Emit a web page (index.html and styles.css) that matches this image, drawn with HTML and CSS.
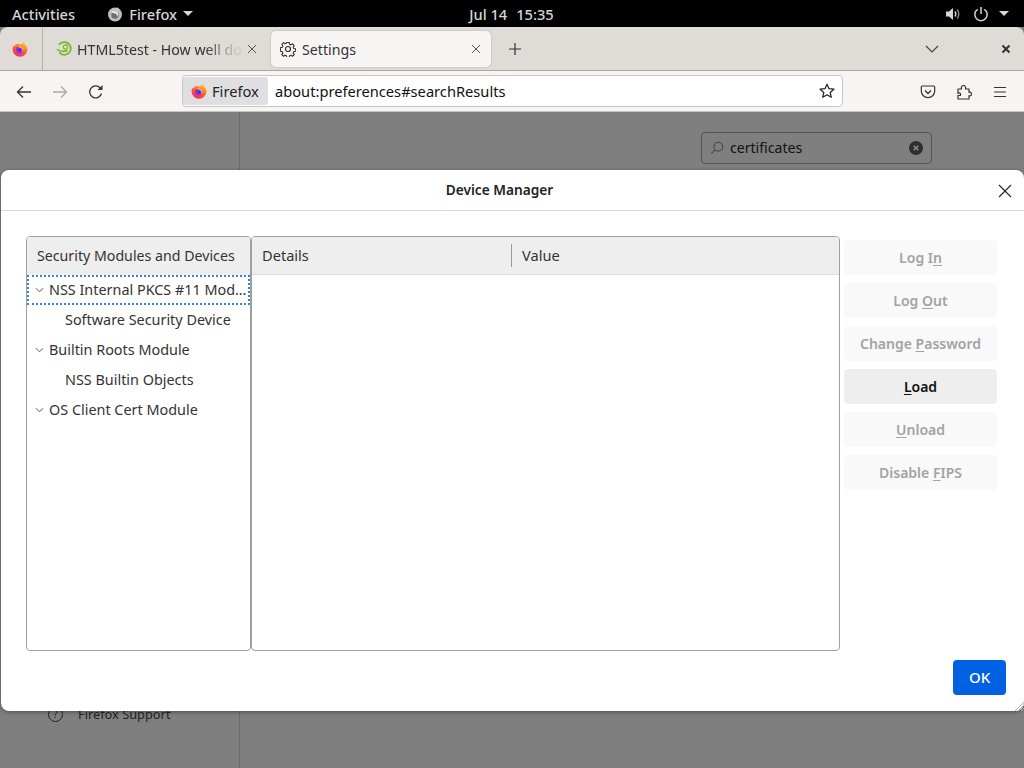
FILE: index.html
```html
<!DOCTYPE html>
<html lang="en">
<head>
<meta charset="utf-8">
<title>Device Manager</title>
<link rel="stylesheet" href="styles.css">
</head>
<body>
<svg class="defs" width="0" height="0" aria-hidden="true">
  <defs>
    <linearGradient id="fx" x1="0.7" y1="0" x2="0.2" y2="1">
      <stop offset="0" stop-color="#ffcf30"/>
      <stop offset="0.45" stop-color="#ff6a2b"/>
      <stop offset="1" stop-color="#f5206a"/>
    </linearGradient>
    <symbol id="firefox" viewBox="0 0 16 16">
      <path d="M11.200 0.600c.3 1.300 1.100 1.700 2.200 3.100 1.200 1.300 2.100 2.800 2.100 4.500a7.500 7.500 0 0 1-15 0c0-1.400.4-2.700 1.100-3.800.3.600.5.900.9 1.100C2.900 3.600 4.600 2.600 6.300 2.800c1 .1 1.600.5 2.200.6 1.400-.2 2.500-1.400 2.700-2.800z" fill="url(#fx)"/>
      <circle cx="7.800" cy="8.800" r="3.800" fill="#8a35e0"/>
      <path d="M5 5.800c2-1.500 5.300-1.100 6.400 1.300.8 1.900-.1 3.900-1.900 4.600 1-1 1.200-2.500.6-3.500C9.400 6.900 7.100 6.600 5 5.800z" fill="#ffb52e"/>
      <circle cx="7.700" cy="9" r="1.500" fill="#4f2bd8"/>
    </symbol>
  </defs>
</svg>
<div class="shell">
  <header class="topbar">
    <div class="top-left">
      <span class="top-label">Activities</span>
      <span class="app-menu">
        <svg class="app-icon" viewBox="0 0 16 16"><circle cx="8" cy="8.500" r="7" fill="#bdbdbd"/><circle cx="8" cy="9" r="3.700" fill="#6e6e6e"/><path d="M4 6c2-2 6-1.500 7 1 .6 1.600 0 3-1 3.800.4-1.600-.6-3-2-3.300C6.500 7.200 5 7 4 6z" fill="#e2e2e2"/><path d="M10 .8c.6 1.400 2 2.200 3 3.400L10 3z" fill="#dcdcdc"/></svg>
        <span class="top-label">Firefox</span>
        <span class="caret"></span>
      </span>
    </div>
    <div class="clock"><span class="clock-date">Jul 14</span><span>15:35</span></div>
    <div class="top-right">
      <svg class="vol" viewBox="0 0 16 16"><path d="M1 5.500h3L8 2v12L4 10.500H1z" fill="#d6d6d6"/><path d="M10 5.500c1 1.500 1 3.500 0 5" stroke="#d6d6d6" stroke-width="1.400" fill="none"/><path d="M12.300 3.500c1.800 2.700 1.800 6.300 0 9" stroke="#8a8a8a" stroke-width="1.400" fill="none"/></svg>
      <svg class="power" viewBox="0 0 16 16"><path d="M4.700 3.300a6.200 6.200 0 1 0 6.600 0" stroke="#d6d6d6" stroke-width="1.500" fill="none"/><path d="M8 1v7" stroke="#d6d6d6" stroke-width="1.500"/></svg>
      <span class="caret"></span>
    </div>
  </header>

  <div class="window">
    <nav class="tabbar">
      <div class="pinned"><svg class="fx"><use href="#firefox"/></svg></div>
      <div class="tab">
        <svg class="tab-icon" viewBox="0 0 16 16"><path d="M3 3.800C4.400 2 6.300 1.200 8.500 1.200c3.500 0 6.300 2.800 6.300 6.300s-2.800 6.300-6.300 6.300c-2.200 0-4-.9-5.300-2.500" stroke="#73ba25" stroke-width="1.800" fill="none"/><path d="M.8 8.200c2.600 1.900 6.800 2.700 10.800 1.300" stroke="#73ba25" stroke-width="1.400" fill="none"/><circle cx="9.500" cy="6" r="2.100" stroke="#73ba25" stroke-width="1.100" fill="none"/></svg>
        <span class="tab-title fade">HTML5test - How well do</span>
        <svg class="tab-x" viewBox="0 0 10 10"><path d="M1 1l8 8M9 1l-8 8" stroke="#555" stroke-width="1"/></svg>
      </div>
      <div class="tab tab-active">
        <svg class="tab-icon" viewBox="0 0 16 16"><path d="M6.700 1h2.600l.4 2 1.300.6 1.800-1.100 1.800 1.800-1.100 1.800.6 1.300 2 .4v2.600l-2 .4-.6 1.300 1.100 1.800-1.800 1.800-1.800-1.100-1.300.6-.4 2H6.700l-.4-2-1.300-.6-1.800 1.100-1.800-1.800 1.100-1.800-.6-1.300-2-.4V6.500l2-.4.6-1.300L1.400 3l1.800-1.800L5 2.300l1.300-.6z" transform="translate(.5 .5) scale(.94)" stroke="#333" stroke-width="1.200" stroke-linejoin="round" fill="none"/><circle cx="8" cy="8" r="2.500" stroke="#333" stroke-width="1.200" fill="none"/></svg>
        <span class="tab-title">Settings</span>
        <svg class="tab-x" viewBox="0 0 10 10"><path d="M1 1l8 8M9 1l-8 8" stroke="#555" stroke-width="1"/></svg>
      </div>
      <svg class="new-tab" viewBox="0 0 14 14"><path d="M7 1v12M1 7h12" stroke="#333" stroke-width="1.200"/></svg>
      <div class="tabbar-end">
        <svg class="tabs-chevron" viewBox="0 0 14 8"><path d="M1 1l6 6 6-6" stroke="#444" stroke-width="1.200" fill="none"/></svg>
        <svg class="win-close" viewBox="0 0 10 10"><path d="M1.500 1.500l7 7M8.500 1.500l-7 7" stroke="#2e3436" stroke-width="2"/></svg>
      </div>
    </nav>

    <div class="toolbar">
      <div class="nav-buttons">
        <svg class="nav-icon" viewBox="0 0 16 16"><path d="M15 8H1.500M7 2.500L1.500 8 7 13.500" stroke="#333" stroke-width="1.300" fill="none"/></svg>
        <svg class="nav-icon" viewBox="0 0 16 16"><path d="M1 8h13.500M9 2.500L14.500 8 9 13.500" stroke="#aaa" stroke-width="1.300" fill="none"/></svg>
        <svg class="nav-icon" viewBox="0 0 16 16"><path d="M13.500 9.500A6 6 0 1 1 12 3.700" stroke="#333" stroke-width="1.300" fill="none"/><path d="M14.500 1v5h-5z" fill="#333"/></svg>
      </div>
      <div class="urlbar">
        <span class="identity"><svg class="fx"><use href="#firefox"/></svg><span>Firefox</span></span>
        <span class="url">about:preferences#searchResults</span>
        <svg class="star" viewBox="0 0 16 16"><path d="M8 1.200l2 4.500 4.900.5-3.700 3.300 1.100 4.800L8 11.800l-4.300 2.500 1.100-4.800L1.100 6.200 6 5.700z" stroke="#222" stroke-width="1.200" stroke-linejoin="round" fill="none"/></svg>
      </div>
      <div class="tool-icons">
        <svg class="tool-icon" viewBox="0 0 16 16"><path d="M2.500 2h11c.8 0 1.200.5 1.200 1.200V7a6.700 6.700 0 0 1-13.400 0V3.200C1.300 2.500 1.700 2 2.500 2z" stroke="#333" stroke-width="1.200" fill="none"/><path d="M5 6.500l3 3 3-3" stroke="#333" stroke-width="1.300" fill="none"/></svg>
        <svg class="tool-icon" viewBox="0 0 16 16"><path d="M2 5h3.500C5 3 6 1.500 7.500 1.500S10 3 9.500 5H13v3.300c2-.6 2.500 1 2.500 1.700s-.5 2.300-2.500 1.700V15H2v-3.500h2.300c.8-1.800-.3-2.700-1-2.700-.5 0-1 .2-1.300.7z" stroke="#333" stroke-width="1.200" stroke-linejoin="round" fill="none"/></svg>
        <svg class="tool-icon" viewBox="0 0 16 16"><path d="M2 3.500h12M2 8h12M2 12.500h12" stroke="#333" stroke-width="1.200"/></svg>
      </div>
    </div>

    <main class="content">
      <aside class="sidebar">
        <div class="support">
          <span class="help">?</span>
          <span>Firefox Support</span>
        </div>
      </aside>
      <div class="pane">
        <div class="search">
          <svg class="search-icon" viewBox="0 0 16 16"><circle cx="9.500" cy="6.500" r="5" stroke="#444" stroke-width="1.200" fill="none"/><path d="M6 10L1.500 14.500" stroke="#444" stroke-width="1.200"/></svg>
          <span class="search-text">certificates</span>
          <svg class="search-clear" viewBox="0 0 14 14"><circle cx="7" cy="7" r="7" fill="#2e2e2e"/><path d="M4.700 4.700l4.600 4.600M9.300 4.700l-4.600 4.600" stroke="#8a8a8a" stroke-width="1.600"/></svg>
        </div>
      </div>

      <section class="dialog">
        <header class="dialog-head">
          <h1 class="dialog-title">Device Manager</h1>
          <svg class="dialog-close" viewBox="0 0 14 14"><path d="M1 1l12 12M13 1L1 13" stroke="#222" stroke-width="1.100"/></svg>
        </header>
        <div class="dialog-body">
          <div class="tree-box">
            <div class="col-head tree-head">Security Modules and Devices</div>
            <ul class="tree">
              <li class="row row-focus"><svg class="twisty" viewBox="0 0 10 6"><path d="M1 1l4 4 4-4" stroke="#555" stroke-width="1.100" fill="none"/></svg><span class="row-text">NSS Internal PKCS #11 Module</span></li>
              <li class="row row-child"><span class="row-text">Software Security Device</span></li>
              <li class="row"><svg class="twisty" viewBox="0 0 10 6"><path d="M1 1l4 4 4-4" stroke="#555" stroke-width="1.100" fill="none"/></svg><span class="row-text">Builtin Roots Module</span></li>
              <li class="row row-child"><span class="row-text">NSS Builtin Objects</span></li>
              <li class="row"><svg class="twisty" viewBox="0 0 10 6"><path d="M1 1l4 4 4-4" stroke="#555" stroke-width="1.100" fill="none"/></svg><span class="row-text">OS Client Cert Module</span></li>
            </ul>
          </div>
          <div class="details-box">
            <div class="col-head details-head">
              <span class="details-col">Details</span>
              <span class="value-col">Value</span>
            </div>
          </div>
          <div class="actions">
            <button class="btn" disabled>Log I<u>n</u></button>
            <button class="btn" disabled>Log <u>O</u>ut</button>
            <button class="btn" disabled>Change <u>P</u>assword</button>
            <button class="btn btn-on"><u>L</u>oad</button>
            <button class="btn" disabled><u>U</u>nload</button>
            <button class="btn" disabled>Disable <u>F</u>IPS</button>
          </div>
        </div>
        <footer class="dialog-foot">
          <button class="ok">OK</button>
        </footer>
        <svg class="grip" viewBox="0 0 10 10"><path d="M10 1L1 10M10 4L4 10M10 7L7 10" stroke="#aaa" stroke-width="1"/></svg>
      </section>
    </main>
  </div>
</div>
</body>
</html>
```
FILE: styles.css
```css
* { box-sizing: border-box; }
html, body { margin: 0; height: 100%; overflow: hidden; }
body { background: #000; font-family: "Noto Sans", "Liberation Sans", sans-serif; font-size: 14px; color: #222; }
.defs { position: absolute; }
.shell { height: 768px; display: flex; flex-direction: column; }

.topbar { height: 27px; flex: none; background: #000; color: #d6d6d6; display: grid; grid-template-columns: 1fr auto 1fr; align-items: center; padding: 0 15px 0 12px; font-size: 14.667px; font-weight: 500; }
.top-left { display: flex; align-items: center; gap: 32px; }
.app-menu { display: flex; align-items: center; gap: 6px; }
.app-icon { width: 16px; height: 16px; }
.caret { width: 0; height: 0; border-left: 5px solid transparent; border-right: 5px solid transparent; border-top: 5px solid #d6d6d6; }
.clock { display: flex; gap: 9px; padding-left: 2px; }
.top-right { display: flex; justify-content: flex-end; align-items: center; }
.vol { width: 16px; height: 16px; margin-right: 12px; }
.power { width: 16px; height: 16px; margin-right: 10px; }

.window { flex: 1; min-height: 0; display: flex; flex-direction: column; background: #7f7f7f; }
.tabbar { height: 44px; flex: none; background: #dfdcd8; border-radius: 8px 8px 0 0; border-bottom: 1px solid #a9a6a3; display: flex; align-items: center; }
.pinned { width: 43px; height: 43px; border-right: 1px solid #b5b2ae; display: flex; align-items: center; justify-content: center; padding-right: 2px; }
.fx { width: 16px; height: 16px; flex: none; }
.tab { width: 228px; height: 36px; display: flex; align-items: center; padding: 0 14px 0 13px; margin-top: 1px; }
.tab-active { background: #f6f5f3; border-radius: 5px; box-shadow: 0 0 2px rgba(0,0,0,.25); width: 220px; padding-left: 9px; padding-right: 10px; }
.tab-icon { width: 16px; height: 16px; flex: none; }
.tab-title { margin-left: 5px; flex: 1; min-width: 0; white-space: nowrap; overflow: hidden; font-size: 14.200px; color: #333; }
.tab-active .tab-title { margin-left: 6px; }
.tab .fade { -webkit-mask-image: linear-gradient(90deg, #000 78%, rgba(0,0,0,.1) 97%); mask-image: linear-gradient(90deg, #000 78%, rgba(0,0,0,.1) 97%); }
.tab-x { width: 10px; height: 10px; flex: none; margin-left: 6px; }
.new-tab { width: 14px; height: 14px; margin-left: 17px; }
.tabbar-end { margin-left: auto; display: flex; align-items: center; gap: 62px; padding-right: 13px; }
.tabs-chevron { width: 14px; height: 8px; }
.win-close { width: 10px; height: 10px; }

.toolbar { height: 41px; flex: none; background: #f6f5f4; border-bottom: 1px solid #c7c5c1; display: flex; align-items: center; padding: 0 16px 0 16px; }
.nav-buttons { display: flex; gap: 20px; margin-right: 78px; padding-top: 2px; }
.nav-icon { width: 16px; height: 16px; }
.urlbar { width: 661px; height: 32px; background: #fff; border: 1px solid #c9c6c1; border-radius: 4px; display: flex; align-items: center; padding: 1px 1px 1px 0; font-size: 14.667px; }
.identity { display: flex; align-items: center; gap: 5px; background: #dfdfe1; height: 28px; width: 85px; padding-left: 8px; border-radius: 3px; }
.url { margin-left: 7px; flex: 1; color: #111; }
.star { width: 16px; height: 16px; margin-right: 6px; }
.tool-icons { margin-left: auto; display: flex; gap: 20px; padding-top: 1px; }
.tool-icon { width: 16px; height: 16px; }

.content { flex: 1; min-height: 0; position: relative; display: flex; background: #7f7f7f; }
.sidebar { width: 240px; flex: none; border-right: 1px solid #6b6b6b; position: relative; }
.support { position: absolute; left: 48px; top: 593px; display: flex; align-items: center; gap: 15px; font-size: 12.800px; color: #222; }
.help { width: 15px; height: 15px; border: 1.500px solid #222; border-radius: 50%; display: flex; align-items: center; justify-content: center; font-size: 10px; }
.pane { flex: 1; display: flex; justify-content: flex-end; padding: 20px 92px 0 0; }
.search { width: 231px; height: 32px; border: 1px solid #555; border-radius: 4px; background: #7f7f7f; display: flex; align-items: center; padding: 0 8px 2px; }
.search-icon { width: 14px; height: 14px; flex: none; margin-top: 2px; }
.search-text { margin-left: 6px; flex: 1; font-size: 14.100px; color: #111; }
.search-clear { width: 14px; height: 14px; margin-top: 2px; }

.dialog { position: absolute; left: 1px; right: 0; top: 58px; height: 541px; background: #fff; border-radius: 8px; box-shadow: 0 1px 4px rgba(0,0,0,.4); display: flex; flex-direction: column; }
.dialog-head { height: 41px; flex: none; border-bottom: 1px solid #d9d9d9; display: flex; align-items: center; justify-content: center; position: relative; padding-right: 26px; }
.dialog-title { margin: 0 0 2px; font-size: 13.700px; font-weight: 600; color: #222; }
.dialog-close { position: absolute; right: 12px; top: 14px; width: 14px; height: 14px; }
.dialog-body { flex: 1; min-height: 0; display: flex; padding: 25px 18px 0 25px; }
.tree-box, .details-box { height: 415px; border: 1px solid #9f9f9f; border-radius: 4px; }
.tree-box { width: 225px; flex: none; }
.details-box { width: 589px; flex: none; }
.col-head { height: 38px; background: #eeeeee; border-radius: 3px 3px 0 0; display: flex; align-items: center; color: #333; font-size: 14.600px; padding-bottom: 1px; }
.tree-head { padding-left: 10px; white-space: nowrap; font-size: 14.200px; }
.details-head { border-bottom: 1px solid #dcdcdc; padding-bottom: 0; }
.details-col { width: 260px; padding-left: 10px; height: 23px; line-height: 23px; border-right: 1px solid #9a9a9a; }
.value-col { padding-left: 10px; height: 23px; line-height: 23px; }
.tree { list-style: none; margin: 0; padding: 0; font-size: 14.400px; }
.row { height: 30px; display: flex; align-items: center; padding: 0 0 2px 8px; color: #333; white-space: nowrap; }
.row-focus { outline: 2px dotted #3584e4; outline-offset: -2px; }
.row-child { padding-left: 38px; }
.twisty { width: 9px; height: 6px; flex: none; margin: 2px 5px 0 0; }
.row-text { min-width: 0; overflow: hidden; text-overflow: ellipsis; padding-right: 2px; }
.actions { width: 153px; flex: none; margin-left: 4px; padding-top: 4px; display: flex; flex-direction: column; gap: 8px; }
.btn { height: 35px; border: 0; border-radius: 4px; background: #f9f9f9; color: #a3a3a3; font: 600 14px "Noto Sans", sans-serif; padding: 0 0 1px; text-underline-offset: 2px; }
.btn-on { background: #eeeeee; color: #111; }
.dialog-foot { flex: none; display: flex; justify-content: flex-end; padding: 0 18px 16px 0; }
.ok { width: 53px; height: 35px; border: 0; border-radius: 4px; background: #0062e3; color: #fff; font: 500 15px "Noto Sans", sans-serif; padding: 0 0 2px; }
.grip { position: absolute; right: 0; bottom: 0; width: 10px; height: 10px; }
```
